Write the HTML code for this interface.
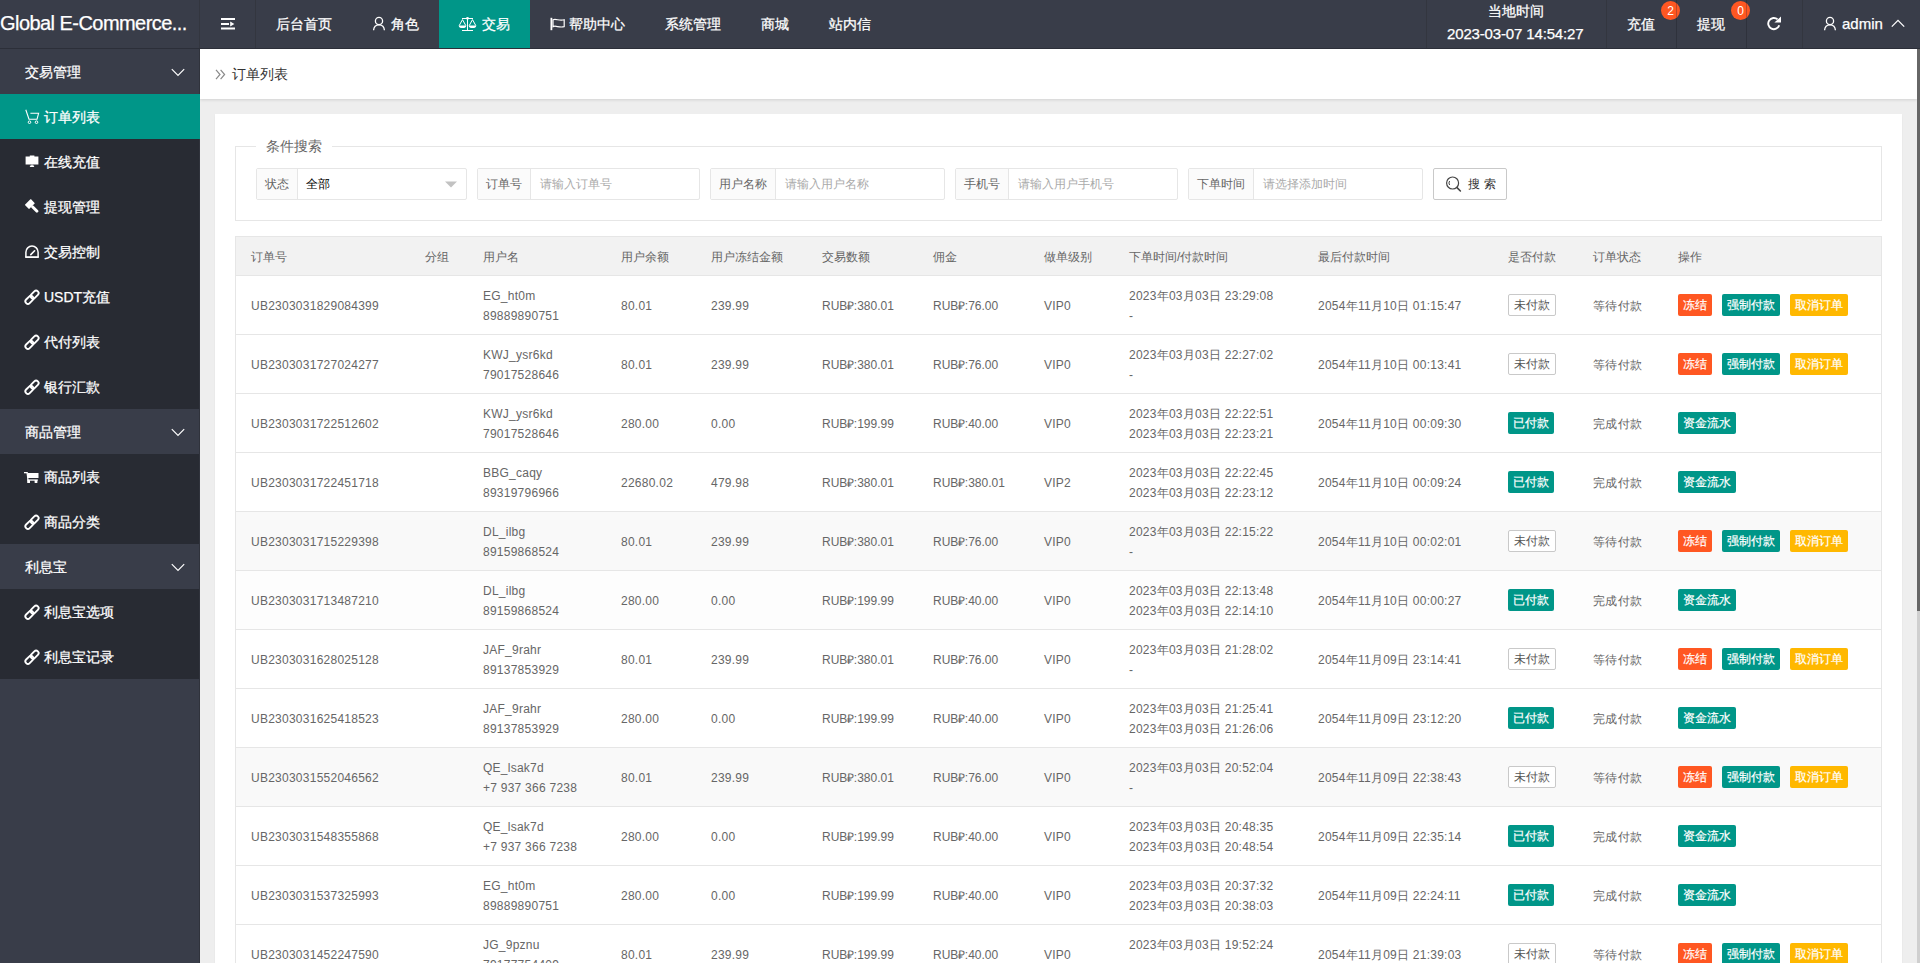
<!DOCTYPE html>
<html><head><meta charset="utf-8"><title>订单列表</title>
<style>
*{box-sizing:border-box}
html,body{margin:0;padding:0;width:1920px;height:963px;overflow:hidden;background:#eee}
body{font-family:"Liberation Sans",sans-serif;position:relative;color:#666}
.abs{position:absolute}
#hdr{position:absolute;left:0;top:0;width:1920px;height:49px;background:#393d49;border-bottom:1px solid #2c2f39}
.vd{position:absolute;top:0;width:1px;height:48px;background:#33363f}
.ht{position:absolute;color:#fff;font-size:14px;line-height:16px;white-space:nowrap;-webkit-text-stroke:0.25px #fff}
#side{position:absolute;left:0;top:49px;width:200px;height:914px;background:#393d49;border-right:1px solid #30333c}
.sp{position:absolute;left:0;width:199px;height:45px;background:#393d49}
.sc{position:absolute;left:0;width:199px;height:45px;background:#282b33}
.sa{background:#009688;width:200px}
.st{position:absolute;left:25px;top:15px;color:#fff;font-size:14px;line-height:16px;white-space:nowrap;-webkit-text-stroke:0.25px #fff}
.sc .st,.sa .st{left:44px}
.si{position:absolute}
.chev{position:absolute;left:171px;top:19px}
#main{position:absolute;left:200px;top:49px;width:1717px;height:914px;background:#eee;overflow:hidden}
#crumb{position:absolute;left:0;top:0;width:1717px;height:50px;background:#fff;box-shadow:0 1px 3px rgba(0,0,0,.12)}
#card{position:absolute;left:15px;top:65px;width:1687px;height:900px;background:#fff;box-shadow:0 1px 2px rgba(0,0,0,.05)}
.fs{position:absolute;left:235px;top:146px;width:1647px;height:75px;border:1px solid #e6e6e6}
.lg{position:absolute;left:256px;top:138px;padding:0 10px;background:#fff;color:#666;font-size:14px;line-height:16px}
.ig{position:absolute;top:168px;height:32px;border:1px solid #e6e6e6;border-radius:2px;background:#fff}
.il{position:absolute;left:0;top:0;height:30px;background:#fbfbfb;border-right:1px solid #e6e6e6;color:#666;font-size:12px;line-height:30px;padding-left:8px;white-space:nowrap}
.ip{position:absolute;top:0;height:30px;line-height:30px;font-size:12px;color:#aaa;white-space:nowrap}
.btn{position:absolute;left:1433px;top:168px;width:74px;height:32px;border:1px solid #c9c9c9;border-radius:2px;background:#fff}
#tbl{position:absolute;left:235px;top:236px;width:1647px;height:740px;border:1px solid #e6e6e6;border-bottom:none}
.th{position:absolute;left:0;top:0;width:1645px;height:39px;background:#f2f2f2;border-bottom:1px solid #e6e6e6}
.tr{position:absolute;left:0;width:1645px;height:59px;border-bottom:1px solid #e6e6e6;background:#fff}
.c{position:absolute;font-size:12px;line-height:20px;color:#666;white-space:nowrap;letter-spacing:0.25px}
.th .c{letter-spacing:0}
.b{position:absolute;height:22px;line-height:22px;font-size:12px;color:#fff;border-radius:2px;text-align:center;white-space:nowrap}
.bp{border:1px solid #c9c9c9;background:#fff;color:#555;line-height:20px}
.bg{background:#009688}.br{background:#ff5722}.by{background:#ffb800}
.bg,.br,.by{-webkit-text-stroke:0.2px #fff}
</style></head><body>

<div id="hdr">
<div class="ht" style="left:0;top:12px;font-size:20px;line-height:22px;letter-spacing:-0.55px">Global E-Commerce...</div>
<div class="vd" style="left:199px"></div>
<div class="vd" style="left:255px"></div>
<svg class="abs" style="left:221px;top:17px" width="15" height="13" viewBox="0 0 15 13"><rect x="0" y="1" width="14" height="2" fill="#fff"/><rect x="0" y="6" width="8" height="2" fill="#fff"/><path d="M9.2 4.6 L13.4 7 L9.2 9.4 Z" fill="#fff"/><rect x="0" y="10.5" width="14" height="2" fill="#fff"/></svg>
<div class="ht" style="left:276px;top:16px">后台首页</div>
<svg class="abs" style="left:372px;top:16px" width="14" height="15" viewBox="0 0 14 15"><circle cx="7" cy="5" r="3.6" fill="none" stroke="#fff" stroke-width="1.3"/><path d="M1.6 14.2 C1.8 10.6 4 8.8 7 8.8 C10 8.8 12.2 10.6 12.4 14.2" fill="none" stroke="#fff" stroke-width="1.3"/></svg>
<div class="ht" style="left:391px;top:16px">角色</div>
<div class="abs" style="left:439px;top:0;width:91px;height:48px;background:#009688"></div>
<svg class="abs" style="left:458px;top:16px" width="19" height="16" viewBox="0 0 19 16"><g stroke="#fff" fill="none" stroke-width="1"><path d="M4 2.5 H15"/><path d="M9.5 2 V14.5"/><path d="M4 14.5 H15"/><path d="M1.2 9.6 L4.5 3.6 L7.8 9.6"/><path d="M11.2 9.6 L14.5 3.6 L17.8 9.6"/></g><circle cx="9.5" cy="2.3" r="1.4" fill="#fff"/><path d="M0.8 9.4 H8.2 A3.7 2.6 0 0 1 0.8 9.4 Z" fill="#fff"/><path d="M10.8 9.4 H18.2 A3.7 2.6 0 0 1 10.8 9.4 Z" fill="#fff"/></svg>
<div class="ht" style="left:482px;top:16px">交易</div>
<svg class="abs" style="left:549px;top:17px" width="17" height="14" viewBox="0 0 17 14"><rect x="1.5" y="0.8" width="1.8" height="12.4" fill="#fff"/><path d="M4 2.8 C7 1.2 10 4.4 15.2 2.8 V9.6 C10 11.2 7 8 4 9.6 Z" fill="none" stroke="#fff" stroke-width="1.2"/></svg>
<div class="ht" style="left:569px;top:16px">帮助中心</div>
<div class="ht" style="left:665px;top:16px">系统管理</div>
<div class="ht" style="left:761px;top:16px">商城</div>
<div class="ht" style="left:829px;top:16px">站内信</div>
<div class="vd" style="left:1426px"></div>
<div class="vd" style="left:1606px"></div>
<div class="vd" style="left:1676px"></div>
<div class="vd" style="left:1746px"></div>
<div class="vd" style="left:1802px"></div>
<div class="ht" style="left:1488px;top:3px">当地时间</div>
<div class="ht" style="left:1447px;top:25px;font-size:15px;line-height:17px;letter-spacing:-0.15px">2023-03-07 14:54:27</div>
<div class="ht" style="left:1627px;top:16px">充值</div>
<div class="abs" style="left:1661px;top:1px;width:19px;height:19px;border-radius:50%;background:#ff5722;color:#fff;font-size:12px;line-height:21px;text-align:center">2</div>
<div class="ht" style="left:1697px;top:16px">提现</div>
<div class="abs" style="left:1731px;top:1px;width:19px;height:19px;border-radius:50%;background:#ff5722;color:#fff;font-size:12px;line-height:21px;text-align:center">0</div>
<div class="vd" style="left:1676px;background:rgba(40,43,52,.3)"></div>
<div class="vd" style="left:1746px;background:rgba(40,43,52,.3)"></div>
<svg class="abs" style="left:1766px;top:16px" width="16" height="15" viewBox="0 0 16 15"><path d="M13.2 9.2 A5.6 5.6 0 1 1 11.6 3.4" fill="none" stroke="#fff" stroke-width="1.9"/><path d="M8.4 6.6 H15 V0.6 Z" fill="#fff"/></svg>
<svg class="abs" style="left:1823px;top:16px" width="14" height="15" viewBox="0 0 14 15"><circle cx="7" cy="5" r="3.6" fill="none" stroke="#fff" stroke-width="1.3"/><path d="M1.6 14.2 C1.8 10.6 4 8.8 7 8.8 C10 8.8 12.2 10.6 12.4 14.2" fill="none" stroke="#fff" stroke-width="1.3"/></svg>
<div class="ht" style="left:1842px;top:15px;font-size:15px;line-height:17px">admin</div>
<svg class="abs" style="left:1891px;top:19px" width="14" height="9" viewBox="0 0 14 9"><path d="M0.8 7.6 L7 1.4 L13.2 7.6" fill="none" stroke="#fff" stroke-width="1.3"/></svg>
</div>
<div id="side">
<div class="sp" style="top:0px"><div class="st">交易管理</div><svg class="chev" width="14" height="9" viewBox="0 0 14 9"><path d="M0.8 1.2 L7 7.4 L13.2 1.2" fill="none" stroke="#fff" stroke-width="1.2"/></svg></div>
<div class="sc sa" style="top:45px"><svg class="si" width="16" height="16" viewBox="0 0 16 16" style="left:24px;top:14px"><g fill="none" stroke="#fff" stroke-width="1.1"><path d="M1.8 1.8 L5 11.3 L13 11.3 L14.6 5.3 L6.4 5.3"/></g><circle cx="5.5" cy="14.2" r="1.3" fill="none" stroke="#fff" stroke-width="1"/><circle cx="12.5" cy="14.2" r="1.3" fill="none" stroke="#fff" stroke-width="1"/></svg><div class="st">订单列表</div></div>
<div class="sc" style="top:90px"><svg class="si" width="16" height="16" viewBox="0 0 16 16" style="left:24px;top:14px"><path d="M1.6 3.6 H5.8 V2.6 H10.4 V3.6 H14.4 V11.6 H1.6 Z" fill="#fff"/><rect x="7.4" y="11.6" width="1.2" height="1.4" fill="#fff"/><rect x="5.8" y="12.6" width="4.4" height="1.3" rx="0.6" fill="#fff"/></svg><div class="st">在线充值</div></div>
<div class="sc" style="top:135px"><svg class="si" width="16" height="16" viewBox="0 0 16 16" style="left:24px;top:14px"><g transform="translate(1 1.2) rotate(-45 8 8)"><rect x="3.8" y="0.6" width="8.4" height="6" rx="0.5" fill="#fff"/><rect x="6.5" y="6" width="3" height="9" rx="1.3" fill="#fff"/></g></svg><div class="st">提现管理</div></div>
<div class="sc" style="top:180px"><svg class="si" width="16" height="16" viewBox="0 0 16 16" style="left:24px;top:14px"><path d="M1.9 14.2 V9.2 A6.1 6.1 0 0 1 14.1 9.2 V14.2" fill="none" stroke="#fff" stroke-width="1.5"/><rect x="1.2" y="13.2" width="13.6" height="1.8" fill="#fff"/><path d="M6.8 11.6 L10.6 7.8" stroke="#fff" stroke-width="1.6" stroke-linecap="round"/></svg><div class="st">交易控制</div></div>
<div class="sc" style="top:225px"><svg class="si" width="16" height="16" viewBox="0 0 16 16" style="left:24px;top:15px"><g fill="none" stroke="#fff" stroke-width="1.9"><rect x="-2.5" y="-4.6" width="5" height="9.2" rx="2.5" transform="translate(10.6 5.6) rotate(45)"/><rect x="-2.5" y="-4.6" width="5" height="9.2" rx="2.5" transform="translate(5.4 10.8) rotate(45)"/></g></svg><div class="st">USDT充值</div></div>
<div class="sc" style="top:270px"><svg class="si" width="16" height="16" viewBox="0 0 16 16" style="left:24px;top:15px"><g fill="none" stroke="#fff" stroke-width="1.9"><rect x="-2.5" y="-4.6" width="5" height="9.2" rx="2.5" transform="translate(10.6 5.6) rotate(45)"/><rect x="-2.5" y="-4.6" width="5" height="9.2" rx="2.5" transform="translate(5.4 10.8) rotate(45)"/></g></svg><div class="st">代付列表</div></div>
<div class="sc" style="top:315px"><svg class="si" width="16" height="16" viewBox="0 0 16 16" style="left:24px;top:15px"><g fill="none" stroke="#fff" stroke-width="1.9"><rect x="-2.5" y="-4.6" width="5" height="9.2" rx="2.5" transform="translate(10.6 5.6) rotate(45)"/><rect x="-2.5" y="-4.6" width="5" height="9.2" rx="2.5" transform="translate(5.4 10.8) rotate(45)"/></g></svg><div class="st">银行汇款</div></div>
<div class="sp" style="top:360px"><div class="st">商品管理</div><svg class="chev" width="14" height="9" viewBox="0 0 14 9"><path d="M0.8 1.2 L7 7.4 L13.2 1.2" fill="none" stroke="#fff" stroke-width="1.2"/></svg></div>
<div class="sc" style="top:405px"><svg class="si" width="16" height="16" viewBox="0 0 16 16" style="left:23px;top:14px"><rect x="1" y="4" width="3.4" height="1.3" fill="#fff"/><path d="M3.4 4 H4.6 L5.6 12 H4.4 Z" fill="#fff"/><rect x="4.5" y="5" width="11" height="5" fill="#fff"/><rect x="4.2" y="11.4" width="10.6" height="1.3" fill="#fff"/><rect x="4.2" y="12" width="2.8" height="3" rx="0.6" fill="#fff"/><rect x="11.6" y="12" width="2.8" height="3" rx="0.6" fill="#fff"/></svg><div class="st">商品列表</div></div>
<div class="sc" style="top:450px"><svg class="si" width="16" height="16" viewBox="0 0 16 16" style="left:24px;top:15px"><g fill="none" stroke="#fff" stroke-width="1.9"><rect x="-2.5" y="-4.6" width="5" height="9.2" rx="2.5" transform="translate(10.6 5.6) rotate(45)"/><rect x="-2.5" y="-4.6" width="5" height="9.2" rx="2.5" transform="translate(5.4 10.8) rotate(45)"/></g></svg><div class="st">商品分类</div></div>
<div class="sp" style="top:495px"><div class="st">利息宝</div><svg class="chev" width="14" height="9" viewBox="0 0 14 9"><path d="M0.8 1.2 L7 7.4 L13.2 1.2" fill="none" stroke="#fff" stroke-width="1.2"/></svg></div>
<div class="sc" style="top:540px"><svg class="si" width="16" height="16" viewBox="0 0 16 16" style="left:24px;top:15px"><g fill="none" stroke="#fff" stroke-width="1.9"><rect x="-2.5" y="-4.6" width="5" height="9.2" rx="2.5" transform="translate(10.6 5.6) rotate(45)"/><rect x="-2.5" y="-4.6" width="5" height="9.2" rx="2.5" transform="translate(5.4 10.8) rotate(45)"/></g></svg><div class="st">利息宝选项</div></div>
<div class="sc" style="top:585px"><svg class="si" width="16" height="16" viewBox="0 0 16 16" style="left:24px;top:15px"><g fill="none" stroke="#fff" stroke-width="1.9"><rect x="-2.5" y="-4.6" width="5" height="9.2" rx="2.5" transform="translate(10.6 5.6) rotate(45)"/><rect x="-2.5" y="-4.6" width="5" height="9.2" rx="2.5" transform="translate(5.4 10.8) rotate(45)"/></g></svg><div class="st">利息宝记录</div></div>
</div>
<div id="main">
<div id="crumb">
<svg class="abs" style="left:15px;top:20px" width="11" height="11" viewBox="0 0 11 11"><path d="M1 0.8 L5 5.5 L1 10.2 M5.6 0.8 L9.6 5.5 L5.6 10.2" fill="none" stroke="#8a8a8a" stroke-width="1.2"/></svg>
<div class="abs" style="left:32px;top:17px;font-size:14px;line-height:16px;color:#333">订单列表</div>
</div>
<div id="card"></div>
</div>
<div class="fs"></div>
<div class="lg">条件搜索</div>
<div class="ig" style="left:256px;width:211px"><div class="il" style="width:41px">状态</div>
<div class="ip" style="left:49px;color:#000">全部</div>
<svg class="abs" style="left:188px;top:12px" width="12" height="7" viewBox="0 0 12 7"><path d="M0 0.5 H12 L6 6.5 Z" fill="#c2c2c2"/></svg>
</div>
<div class="ig" style="left:477px;width:223px"><div class="il" style="width:53px">订单号</div>
<div class="ip" style="left:62px">请输入订单号</div>
</div>
<div class="ig" style="left:710px;width:235px"><div class="il" style="width:65px">用户名称</div>
<div class="ip" style="left:74px">请输入用户名称</div>
</div>
<div class="ig" style="left:955px;width:223px"><div class="il" style="width:53px">手机号</div>
<div class="ip" style="left:62px">请输入用户手机号</div>
</div>
<div class="ig" style="left:1188px;width:235px"><div class="il" style="width:65px">下单时间</div>
<div class="ip" style="left:74px">请选择添加时间</div>
</div>
<div class="btn"><svg class="abs" style="left:11px;top:6px" width="18" height="18" viewBox="0 0 18 18"><circle cx="7.6" cy="8" r="6" fill="none" stroke="#444" stroke-width="1.2"/><path d="M4.6 6 A3.5 3.5 0 0 0 4.6 10" fill="none" stroke="#444" stroke-width="1"/><path d="M12 12.6 L15.4 16" stroke="#444" stroke-width="1.6" stroke-linecap="round"/></svg><div class="abs" style="left:34px;top:0;line-height:30px;font-size:12px;color:#333;letter-spacing:4px">搜索</div></div>
<div id="tbl">
<div class="th">
<div class="c" style="left:15px;top:10px">订单号</div>
<div class="c" style="left:189px;top:10px">分组</div>
<div class="c" style="left:247px;top:10px">用户名</div>
<div class="c" style="left:385px;top:10px">用户余额</div>
<div class="c" style="left:475px;top:10px">用户冻结金额</div>
<div class="c" style="left:586px;top:10px">交易数额</div>
<div class="c" style="left:697px;top:10px">佣金</div>
<div class="c" style="left:808px;top:10px">做单级别</div>
<div class="c" style="left:893px;top:10px">下单时间/付款时间</div>
<div class="c" style="left:1082px;top:10px">最后付款时间</div>
<div class="c" style="left:1272px;top:10px">是否付款</div>
<div class="c" style="left:1357px;top:10px">订单状态</div>
<div class="c" style="left:1442px;top:10px">操作</div>
</div>
<div class="tr" style="top:39px;background:#fff">
<div class="c" style="left:15px;top:20px">UB2303031829084399</div>
<div class="c" style="left:247px;top:10px">EG_ht0m<br>89889890751</div>
<div class="c" style="left:385px;top:20px">80.01</div>
<div class="c" style="left:475px;top:20px">239.99</div>
<div class="c" style="left:586px;top:20px;letter-spacing:0">RUB<span style="margin-right:-0.5px">₽</span>:380.01</div>
<div class="c" style="left:697px;top:20px;letter-spacing:0">RUB<span style="margin-right:-0.5px">₽</span>:76.00</div>
<div class="c" style="left:808px;top:20px">VIP0</div>
<div class="c" style="left:893px;top:10px">2023年03月03日 23:29:08<br>-</div>
<div class="c" style="left:1082px;top:20px">2054年11月10日 01:15:47</div>
<div class="b bp" style="left:1272px;top:18px;width:48px">未付款</div>
<div class="c" style="left:1357px;top:20px">等待付款</div>
<div class="b br" style="left:1442px;top:18px;width:34px">冻结</div>
<div class="b bg" style="left:1486px;top:18px;width:58px">强制付款</div>
<div class="b by" style="left:1554px;top:18px;width:58px">取消订单</div>
</div>
<div class="tr" style="top:98px;background:#fff">
<div class="c" style="left:15px;top:20px">UB2303031727024277</div>
<div class="c" style="left:247px;top:10px">KWJ_ysr6kd<br>79017528646</div>
<div class="c" style="left:385px;top:20px">80.01</div>
<div class="c" style="left:475px;top:20px">239.99</div>
<div class="c" style="left:586px;top:20px;letter-spacing:0">RUB<span style="margin-right:-0.5px">₽</span>:380.01</div>
<div class="c" style="left:697px;top:20px;letter-spacing:0">RUB<span style="margin-right:-0.5px">₽</span>:76.00</div>
<div class="c" style="left:808px;top:20px">VIP0</div>
<div class="c" style="left:893px;top:10px">2023年03月03日 22:27:02<br>-</div>
<div class="c" style="left:1082px;top:20px">2054年11月10日 00:13:41</div>
<div class="b bp" style="left:1272px;top:18px;width:48px">未付款</div>
<div class="c" style="left:1357px;top:20px">等待付款</div>
<div class="b br" style="left:1442px;top:18px;width:34px">冻结</div>
<div class="b bg" style="left:1486px;top:18px;width:58px">强制付款</div>
<div class="b by" style="left:1554px;top:18px;width:58px">取消订单</div>
</div>
<div class="tr" style="top:157px;background:#fff">
<div class="c" style="left:15px;top:20px">UB2303031722512602</div>
<div class="c" style="left:247px;top:10px">KWJ_ysr6kd<br>79017528646</div>
<div class="c" style="left:385px;top:20px">280.00</div>
<div class="c" style="left:475px;top:20px">0.00</div>
<div class="c" style="left:586px;top:20px;letter-spacing:0">RUB<span style="margin-right:-0.5px">₽</span>:199.99</div>
<div class="c" style="left:697px;top:20px;letter-spacing:0">RUB<span style="margin-right:-0.5px">₽</span>:40.00</div>
<div class="c" style="left:808px;top:20px">VIP0</div>
<div class="c" style="left:893px;top:10px">2023年03月03日 22:22:51<br>2023年03月03日 22:23:21</div>
<div class="c" style="left:1082px;top:20px">2054年11月10日 00:09:30</div>
<div class="b bg" style="left:1272px;top:18px;width:46px">已付款</div>
<div class="c" style="left:1357px;top:20px">完成付款</div>
<div class="b bg" style="left:1442px;top:18px;width:58px">资金流水</div>
</div>
<div class="tr" style="top:216px;background:#fff">
<div class="c" style="left:15px;top:20px">UB2303031722451718</div>
<div class="c" style="left:247px;top:10px">BBG_caqy<br>89319796966</div>
<div class="c" style="left:385px;top:20px">22680.02</div>
<div class="c" style="left:475px;top:20px">479.98</div>
<div class="c" style="left:586px;top:20px;letter-spacing:0">RUB<span style="margin-right:-0.5px">₽</span>:380.01</div>
<div class="c" style="left:697px;top:20px;letter-spacing:0">RUB<span style="margin-right:-0.5px">₽</span>:380.01</div>
<div class="c" style="left:808px;top:20px">VIP2</div>
<div class="c" style="left:893px;top:10px">2023年03月03日 22:22:45<br>2023年03月03日 22:23:12</div>
<div class="c" style="left:1082px;top:20px">2054年11月10日 00:09:24</div>
<div class="b bg" style="left:1272px;top:18px;width:46px">已付款</div>
<div class="c" style="left:1357px;top:20px">完成付款</div>
<div class="b bg" style="left:1442px;top:18px;width:58px">资金流水</div>
</div>
<div class="tr" style="top:275px;background:#f9f9f9">
<div class="c" style="left:15px;top:20px">UB2303031715229398</div>
<div class="c" style="left:247px;top:10px">DL_ilbg<br>89159868524</div>
<div class="c" style="left:385px;top:20px">80.01</div>
<div class="c" style="left:475px;top:20px">239.99</div>
<div class="c" style="left:586px;top:20px;letter-spacing:0">RUB<span style="margin-right:-0.5px">₽</span>:380.01</div>
<div class="c" style="left:697px;top:20px;letter-spacing:0">RUB<span style="margin-right:-0.5px">₽</span>:76.00</div>
<div class="c" style="left:808px;top:20px">VIP0</div>
<div class="c" style="left:893px;top:10px">2023年03月03日 22:15:22<br>-</div>
<div class="c" style="left:1082px;top:20px">2054年11月10日 00:02:01</div>
<div class="b bp" style="left:1272px;top:18px;width:48px">未付款</div>
<div class="c" style="left:1357px;top:20px">等待付款</div>
<div class="b br" style="left:1442px;top:18px;width:34px">冻结</div>
<div class="b bg" style="left:1486px;top:18px;width:58px">强制付款</div>
<div class="b by" style="left:1554px;top:18px;width:58px">取消订单</div>
</div>
<div class="tr" style="top:334px;background:#fdfdfd">
<div class="c" style="left:15px;top:20px">UB2303031713487210</div>
<div class="c" style="left:247px;top:10px">DL_ilbg<br>89159868524</div>
<div class="c" style="left:385px;top:20px">280.00</div>
<div class="c" style="left:475px;top:20px">0.00</div>
<div class="c" style="left:586px;top:20px;letter-spacing:0">RUB<span style="margin-right:-0.5px">₽</span>:199.99</div>
<div class="c" style="left:697px;top:20px;letter-spacing:0">RUB<span style="margin-right:-0.5px">₽</span>:40.00</div>
<div class="c" style="left:808px;top:20px">VIP0</div>
<div class="c" style="left:893px;top:10px">2023年03月03日 22:13:48<br>2023年03月03日 22:14:10</div>
<div class="c" style="left:1082px;top:20px">2054年11月10日 00:00:27</div>
<div class="b bg" style="left:1272px;top:18px;width:46px">已付款</div>
<div class="c" style="left:1357px;top:20px">完成付款</div>
<div class="b bg" style="left:1442px;top:18px;width:58px">资金流水</div>
</div>
<div class="tr" style="top:393px;background:#fff">
<div class="c" style="left:15px;top:20px">UB2303031628025128</div>
<div class="c" style="left:247px;top:10px">JAF_9rahr<br>89137853929</div>
<div class="c" style="left:385px;top:20px">80.01</div>
<div class="c" style="left:475px;top:20px">239.99</div>
<div class="c" style="left:586px;top:20px;letter-spacing:0">RUB<span style="margin-right:-0.5px">₽</span>:380.01</div>
<div class="c" style="left:697px;top:20px;letter-spacing:0">RUB<span style="margin-right:-0.5px">₽</span>:76.00</div>
<div class="c" style="left:808px;top:20px">VIP0</div>
<div class="c" style="left:893px;top:10px">2023年03月03日 21:28:02<br>-</div>
<div class="c" style="left:1082px;top:20px">2054年11月09日 23:14:41</div>
<div class="b bp" style="left:1272px;top:18px;width:48px">未付款</div>
<div class="c" style="left:1357px;top:20px">等待付款</div>
<div class="b br" style="left:1442px;top:18px;width:34px">冻结</div>
<div class="b bg" style="left:1486px;top:18px;width:58px">强制付款</div>
<div class="b by" style="left:1554px;top:18px;width:58px">取消订单</div>
</div>
<div class="tr" style="top:452px;background:#fff">
<div class="c" style="left:15px;top:20px">UB2303031625418523</div>
<div class="c" style="left:247px;top:10px">JAF_9rahr<br>89137853929</div>
<div class="c" style="left:385px;top:20px">280.00</div>
<div class="c" style="left:475px;top:20px">0.00</div>
<div class="c" style="left:586px;top:20px;letter-spacing:0">RUB<span style="margin-right:-0.5px">₽</span>:199.99</div>
<div class="c" style="left:697px;top:20px;letter-spacing:0">RUB<span style="margin-right:-0.5px">₽</span>:40.00</div>
<div class="c" style="left:808px;top:20px">VIP0</div>
<div class="c" style="left:893px;top:10px">2023年03月03日 21:25:41<br>2023年03月03日 21:26:06</div>
<div class="c" style="left:1082px;top:20px">2054年11月09日 23:12:20</div>
<div class="b bg" style="left:1272px;top:18px;width:46px">已付款</div>
<div class="c" style="left:1357px;top:20px">完成付款</div>
<div class="b bg" style="left:1442px;top:18px;width:58px">资金流水</div>
</div>
<div class="tr" style="top:511px;background:#f9f9f9">
<div class="c" style="left:15px;top:20px">UB2303031552046562</div>
<div class="c" style="left:247px;top:10px">QE_lsak7d<br>+7 937 366 7238</div>
<div class="c" style="left:385px;top:20px">80.01</div>
<div class="c" style="left:475px;top:20px">239.99</div>
<div class="c" style="left:586px;top:20px;letter-spacing:0">RUB<span style="margin-right:-0.5px">₽</span>:380.01</div>
<div class="c" style="left:697px;top:20px;letter-spacing:0">RUB<span style="margin-right:-0.5px">₽</span>:76.00</div>
<div class="c" style="left:808px;top:20px">VIP0</div>
<div class="c" style="left:893px;top:10px">2023年03月03日 20:52:04<br>-</div>
<div class="c" style="left:1082px;top:20px">2054年11月09日 22:38:43</div>
<div class="b bp" style="left:1272px;top:18px;width:48px">未付款</div>
<div class="c" style="left:1357px;top:20px">等待付款</div>
<div class="b br" style="left:1442px;top:18px;width:34px">冻结</div>
<div class="b bg" style="left:1486px;top:18px;width:58px">强制付款</div>
<div class="b by" style="left:1554px;top:18px;width:58px">取消订单</div>
</div>
<div class="tr" style="top:570px;background:#fff">
<div class="c" style="left:15px;top:20px">UB2303031548355868</div>
<div class="c" style="left:247px;top:10px">QE_lsak7d<br>+7 937 366 7238</div>
<div class="c" style="left:385px;top:20px">280.00</div>
<div class="c" style="left:475px;top:20px">0.00</div>
<div class="c" style="left:586px;top:20px;letter-spacing:0">RUB<span style="margin-right:-0.5px">₽</span>:199.99</div>
<div class="c" style="left:697px;top:20px;letter-spacing:0">RUB<span style="margin-right:-0.5px">₽</span>:40.00</div>
<div class="c" style="left:808px;top:20px">VIP0</div>
<div class="c" style="left:893px;top:10px">2023年03月03日 20:48:35<br>2023年03月03日 20:48:54</div>
<div class="c" style="left:1082px;top:20px">2054年11月09日 22:35:14</div>
<div class="b bg" style="left:1272px;top:18px;width:46px">已付款</div>
<div class="c" style="left:1357px;top:20px">完成付款</div>
<div class="b bg" style="left:1442px;top:18px;width:58px">资金流水</div>
</div>
<div class="tr" style="top:629px;background:#fff">
<div class="c" style="left:15px;top:20px">UB2303031537325993</div>
<div class="c" style="left:247px;top:10px">EG_ht0m<br>89889890751</div>
<div class="c" style="left:385px;top:20px">280.00</div>
<div class="c" style="left:475px;top:20px">0.00</div>
<div class="c" style="left:586px;top:20px;letter-spacing:0">RUB<span style="margin-right:-0.5px">₽</span>:199.99</div>
<div class="c" style="left:697px;top:20px;letter-spacing:0">RUB<span style="margin-right:-0.5px">₽</span>:40.00</div>
<div class="c" style="left:808px;top:20px">VIP0</div>
<div class="c" style="left:893px;top:10px">2023年03月03日 20:37:32<br>2023年03月03日 20:38:03</div>
<div class="c" style="left:1082px;top:20px">2054年11月09日 22:24:11</div>
<div class="b bg" style="left:1272px;top:18px;width:46px">已付款</div>
<div class="c" style="left:1357px;top:20px">完成付款</div>
<div class="b bg" style="left:1442px;top:18px;width:58px">资金流水</div>
</div>
<div class="tr" style="top:688px;background:#fff">
<div class="c" style="left:15px;top:20px">UB2303031452247590</div>
<div class="c" style="left:247px;top:10px">JG_9pznu<br>79177754409</div>
<div class="c" style="left:385px;top:20px">80.01</div>
<div class="c" style="left:475px;top:20px">239.99</div>
<div class="c" style="left:586px;top:20px;letter-spacing:0">RUB<span style="margin-right:-0.5px">₽</span>:199.99</div>
<div class="c" style="left:697px;top:20px;letter-spacing:0">RUB<span style="margin-right:-0.5px">₽</span>:40.00</div>
<div class="c" style="left:808px;top:20px">VIP0</div>
<div class="c" style="left:893px;top:10px">2023年03月03日 19:52:24<br>-</div>
<div class="c" style="left:1082px;top:20px">2054年11月09日 21:39:03</div>
<div class="b bp" style="left:1272px;top:18px;width:48px">未付款</div>
<div class="c" style="left:1357px;top:20px">等待付款</div>
<div class="b br" style="left:1442px;top:18px;width:34px">冻结</div>
<div class="b bg" style="left:1486px;top:18px;width:58px">强制付款</div>
<div class="b by" style="left:1554px;top:18px;width:58px">取消订单</div>
</div>
</div>
<div class="abs" style="left:1917px;top:49px;width:3px;height:914px;background:#cfcfcf"></div>
<div class="abs" style="left:1917px;top:49px;width:3px;height:562px;background:#666"></div>
</body></html>
